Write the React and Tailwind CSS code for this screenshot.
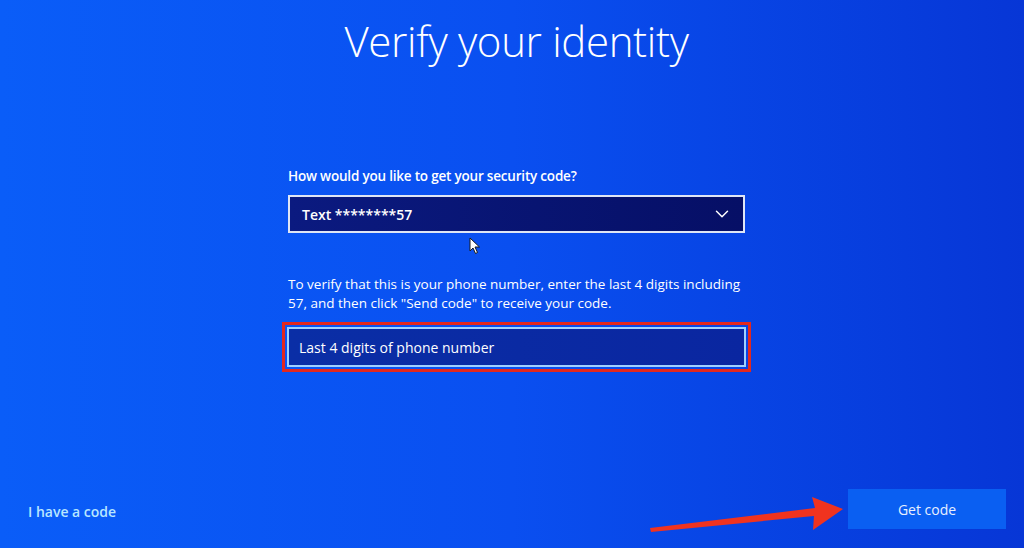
import { ChevronDown } from "lucide-react";

export default function App() {
  return (
    <div
      className="relative flex flex-col h-[548px] w-[1024px] overflow-hidden bg-gradient-to-r from-[#0a5df8] via-[#0a4ff0] to-[#0736d6] text-white"
      style={{ fontFamily: '"Open Sans", "Noto Sans", sans-serif' }}
    >
      {/* title */}
      <h1 className="ml-[9px] mt-[13px] text-center text-[42px] font-light leading-[56px] tracking-[-0.35px]">
        Verify your identity
      </h1>

      {/* form */}
      <div className="ml-[288px] mt-[97px] w-[457px]">
        <p className="text-[13.5px] font-semibold leading-5 tracking-[-0.2px]">
          How would you like to get your security code?
        </p>

        <div className="mt-[9px] flex h-[38px] items-center justify-between border-2 border-[#dfe6f5] bg-gradient-to-r from-[#0b1a80] to-[#060f66] pl-[12px] pr-[10px]">
          <span className="text-[14px] font-semibold">Text ********57</span>
          <ChevronDown size={22} strokeWidth={1.6} />
        </div>

        {/* mouse pointer */}
        <div className="relative h-[42px]">
          <svg className="absolute left-[181px] top-[4px]" width="12" height="18" viewBox="0 0 12 18">
            <path d="M1 1 L1 14 L4 11 L6.5 16.5 L8.5 15.5 L6 10 L10.5 10 Z" fill="#fff" stroke="#1a1a1a" strokeWidth="1" />
          </svg>
        </div>

        <p className="text-[13.5px] font-medium leading-[19px] tracking-[0px]">
          To verify that this is your phone number, enter the last 4 digits including 57, and then click "Send code" to receive your code.
        </p>

        <div className="mt-[9px] -mx-[6px] border-[3px] border-[#e3281e] p-[2px]">
          <div className="flex h-[40px] items-center border-2 border-[#9fd0ff] bg-gradient-to-r from-[#0a2ea6] to-[#0a26a0] px-[10px]">
            <span className="text-[14px]">Last 4 digits of phone number</span>
          </div>
        </div>
      </div>

      <div className="flex-1" />

      {/* bottom bar */}
      <div className="flex items-center justify-between pb-[19px] pl-[28px] pr-[18px]">
        <span className="mt-[4px] text-[14px] font-semibold text-[#b8e6ff]">I have a code</span>
        <button className="h-[40px] w-[158px] bg-[#0a5ff2] text-[14px] font-medium text-[#e8f0ff]">
          Get code
        </button>
      </div>

      {/* red annotation arrow */}
      <svg className="absolute left-[645px] top-[488px]" width="206" height="48" viewBox="0 0 206 48">
        <path d="M5 40 L170 20 L167 9 L198 21 L168 42 L169 28 L6 44 Z" fill="#f0331f" />
      </svg>
    </div>
  );
}
